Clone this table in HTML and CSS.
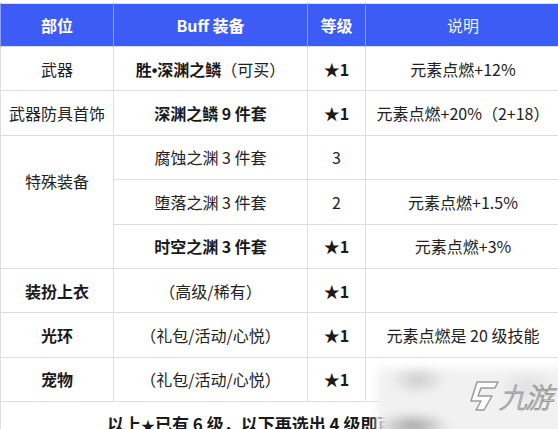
FILE: index.html
```html
<!DOCTYPE html>
<html lang="zh">
<head>
<meta charset="utf-8">
<link rel="stylesheet" href="styles.css">
</head>
<body>
<div class="page">
<table class="buff">
  <colgroup>
    <col class="c1"><col class="c2"><col class="c3"><col class="c4">
  </colgroup>
  <thead>
    <tr>
      <th>部位</th>
      <th>Buff 装备</th>
      <th>等级</th>
      <th class="light">说明</th>
    </tr>
  </thead>
  <tbody>
    <tr>
      <td>武器</td>
      <td><b>胜<span class="dot">•</span>深渊之鳞</b>（可买）</td>
      <td><b>★1</b></td>
      <td>元素点燃+12%</td>
    </tr>
    <tr>
      <td>武器防具首饰</td>
      <td><b>深渊之鳞 9 件套</b></td>
      <td><b>★1</b></td>
      <td>元素点燃+20%（2+18）</td>
    </tr>
    <tr>
      <td rowspan="3" class="special">特殊装备</td>
      <td>腐蚀之渊 3 件套</td>
      <td>3</td>
      <td></td>
    </tr>
    <tr>
      <td>堕落之渊 3 件套</td>
      <td>2</td>
      <td>元素点燃+1.5%</td>
    </tr>
    <tr>
      <td><b>时空之渊 3 件套</b></td>
      <td><b>★1</b></td>
      <td>元素点燃+3%</td>
    </tr>
    <tr>
      <td><b>装扮上衣</b></td>
      <td>（高级/稀有）</td>
      <td><b>★1</b></td>
      <td></td>
    </tr>
    <tr>
      <td><b>光环</b></td>
      <td>（礼包/活动/心悦）</td>
      <td><b>★1</b></td>
      <td>元素点燃是 20 级技能</td>
    </tr>
    <tr>
      <td><b>宠物</b></td>
      <td>（礼包/活动/心悦）</td>
      <td><b>★1</b></td>
      <td></td>
    </tr>
    <tr>
      <td colspan="4" class="foot"><b>以上<span class="star">★</span>已有 6 级，以下再选出 4 级即可</b></td>
    </tr>
  </tbody>
</table>
<div class="watermark">
  <div class="blur"></div>
  <div class="logo">
    <svg class="mark" width="34" height="32" viewBox="0 0 34 32">
      <path d="M11 2 H32 L29 8 H15 L12 16 H26 L18 30 H10 L15 21 H5 Z" fill="#ffffff" stroke="#9a9a9a" stroke-width="1.5" stroke-linejoin="round"/>
    </svg>
    <span class="brand">九游</span>
  </div>
</div>
</div>
</body>
</html>
```
FILE: styles.css
```css
html, body {
  margin: 0;
  padding: 0;
  background: #ffffff;
}
.page {
  position: relative;
  width: 558px;
  height: 429px;
  overflow: hidden;
  padding-top: 3px;
  box-sizing: border-box;
}
.buff {
  border-collapse: collapse;
  table-layout: fixed;
  width: 560px;
  font-family: "Microsoft YaHei", "Noto Sans CJK SC", "Noto Sans", sans-serif;
  font-size: 16px;
  color: #222222;
  border-top: 1px solid #e2e2e2;
}
.c1 { width: 113px; }
.c2 { width: 194px; }
.c3 { width: 58px; }
.c4 { width: 195px; }
.buff th {
  background: #3d5cf6;
  color: #ffffff;
  font-weight: 700;
  font-size: 16px;
  height: 42px;
  padding: 0;
  border-left: 1px solid #8c9ff8;
  border-right: 1px solid #8c9ff8;
}
.buff th.light {
  font-weight: 400;
  color: #eef1ff;
}
.buff td {
  height: 43.4px;
  padding: 0;
  text-align: center;
  vertical-align: middle;
  border: 1px solid #dedede;
  white-space: nowrap;
}
.buff td b {
  font-weight: 700;
  color: #1a1a1a;
}
.dot {
  font-family: "Liberation Sans", sans-serif;
}
.buff td.special {
  padding-bottom: 42px;
}
.buff td.foot {
  vertical-align: top;
  text-align: left;
  padding-top: 9px;
  padding-left: 106px;
  font-size: 17px;
}
.star {
  font-size: 14px;
}
.watermark {
  position: absolute;
  left: 378px;
  top: 368px;
  width: 190px;
  height: 70px;
}
.blur {
  position: absolute;
  inset: 0;
  background:
    radial-gradient(ellipse 40px 20px at 40px 12px, rgba(190,190,190,0.8), rgba(255,255,255,0) 70%),
    radial-gradient(ellipse 50px 18px at 35px 58px, rgba(150,150,150,0.9), rgba(255,255,255,0) 75%),
    radial-gradient(ellipse 40px 25px at 150px 20px, rgba(215,215,215,0.7), rgba(255,255,255,0) 75%),
    #f1f1f1;
  filter: blur(4px);
}
.logo {
  position: absolute;
  left: 88px;
  top: 8px;
  display: flex;
  align-items: center;
  gap: 2px;
}
.mark {
  display: block;
}
.brand {
  font-family: "Noto Sans CJK SC", sans-serif;
  font-size: 28px;
  font-weight: 300;
  color: #ffffff;
  -webkit-text-stroke: 1px #9a9a9a;
  transform: skewX(-14deg);
  letter-spacing: -2px;
}
```
